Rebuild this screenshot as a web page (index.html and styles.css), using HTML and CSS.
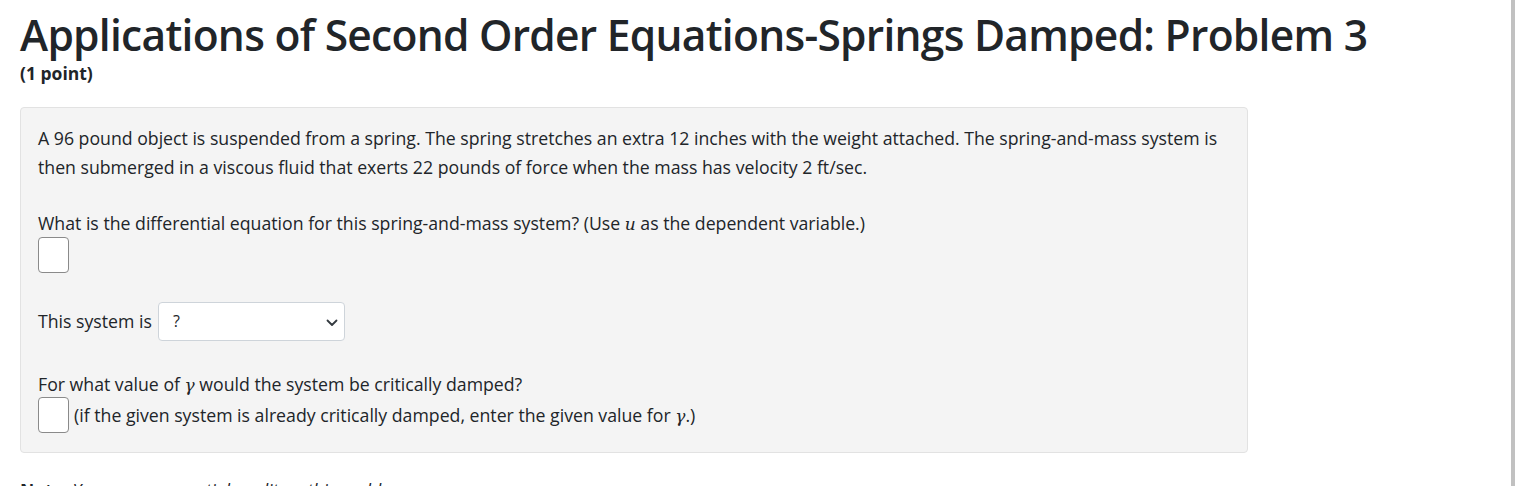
FILE: index.html
```html
<!DOCTYPE html>
<html>
<head>
<meta charset="utf-8">
<link rel="stylesheet" href="styles.css">
</head>
<body>
<div class="page">
  <h1 class="title">Applications of Second Order Equations-Springs Damped: Problem 3</h1>
  <div class="points">(1 point)</div>
  <div class="problem">
    <p class="para">A 96 pound object is suspended from a spring. The spring stretches an extra 12 inches with the weight attached. The spring-and-mass system is then submerged in a viscous fluid that exerts 22 pounds of force when the mass has velocity 2 ft/sec.</p>
    <div class="block first-block">
      <div class="line">What is the differential equation for this spring-and-mass system? (Use <i class="math">u</i> as the dependent variable.)</div>
      <div class="answer first"><span class="box"></span></div>
    </div>
    <div class="block sel-row">
      <span>This system is</span>
      <span class="select">
        <span class="sel-val">?</span>
        <svg class="chev" width="12" height="8" viewBox="0 0 12 8"><path d="M1.5 1.5 L6 6 L10.5 1.5" fill="none" stroke="#343a40" stroke-width="1.8" stroke-linecap="round" stroke-linejoin="round"/></svg>
      </span>
    </div>
    <div class="block last">
      <div class="line">For what value of <i class="math">γ</i> would the system be critically damped?</div>
      <div class="answer inline"><span class="box"></span><span>(if the given system is already critically damped, enter the given value for <i class="math">γ</i>.)</span></div>
    </div>
  </div>
  <p class="note"><b>Note:</b> <i>You can earn partial credit on this problem.</i></p>
</div>
<div class="scrollbar"></div>
</body>
</html>
```

FILE: styles.css
```css
html, body {
  margin: 0;
  padding: 0;
  background: #ffffff;
  overflow: hidden;
}
body {
  font-family: "Open Sans", "Noto Sans", sans-serif;
  color: #212529;
  width: 1520px;
  height: 486px;
  position: relative;
}
.page {
  padding: 0 0 0 20px;
}
.title {
  margin: 0;
  padding-top: 9px;
  font-size: 42.5px;
  font-weight: 600;
  line-height: 52px;
  letter-spacing: -0.72px;
  color: #212529;
}
.points {
  font-size: 17.5px;
  font-weight: 700;
  line-height: 20px;
  margin-top: 2px;
}
.problem {
  margin-top: 24px;
  width: 1192px;
  background: #f4f4f4;
  border: 1px solid #e2e2e2;
  border-radius: 4px;
  padding: 16px 17px 19px 17px;
  font-size: 17.7px;
  line-height: 29px;
}
.para {
  margin: 0 0 27px 0;
}
.block {
  margin-bottom: 26px;
}
.block.first-block {
  margin-bottom: 29px;
}
.block.last {
  margin-bottom: 0;
  margin-top: 29px;
}
.line {
  line-height: 29px;
}
.answer {
  display: flex;
  align-items: center;
  gap: 5px;
  margin-top: -2px;
}
.answer.first {
  margin-top: -1px;
}
.box {
  display: inline-block;
  width: 29px;
  height: 34px;
  background: #fff;
  border: 1px solid #8a8a8a;
  border-radius: 4px;
  flex: none;
}
.sel-row {
  display: flex;
  align-items: center;
  gap: 6px;
}
.select {
  position: relative;
  display: inline-flex;
  align-items: center;
  width: 187px;
  height: 39px;
  background: #fff;
  border: 1px solid #ced4da;
  border-radius: 4px;
  box-sizing: border-box;
  padding-left: 14px;
}
.sel-val {
  font-size: 16px;
}
.chev {
  position: absolute;
  right: 6px;
  top: 16px;
}
.math {
  font-family: "DejaVu Serif", "Liberation Serif", serif;
  font-style: italic;
  font-size: 17px;
  line-height: 1;
}
.note {
  margin: 25px 0 0 0;
  font-size: 17.5px;
}
.scrollbar {
  position: absolute;
  top: 0;
  left: 1511px;
  width: 4px;
  height: 486px;
  background: #c1c1c1;
}
```
